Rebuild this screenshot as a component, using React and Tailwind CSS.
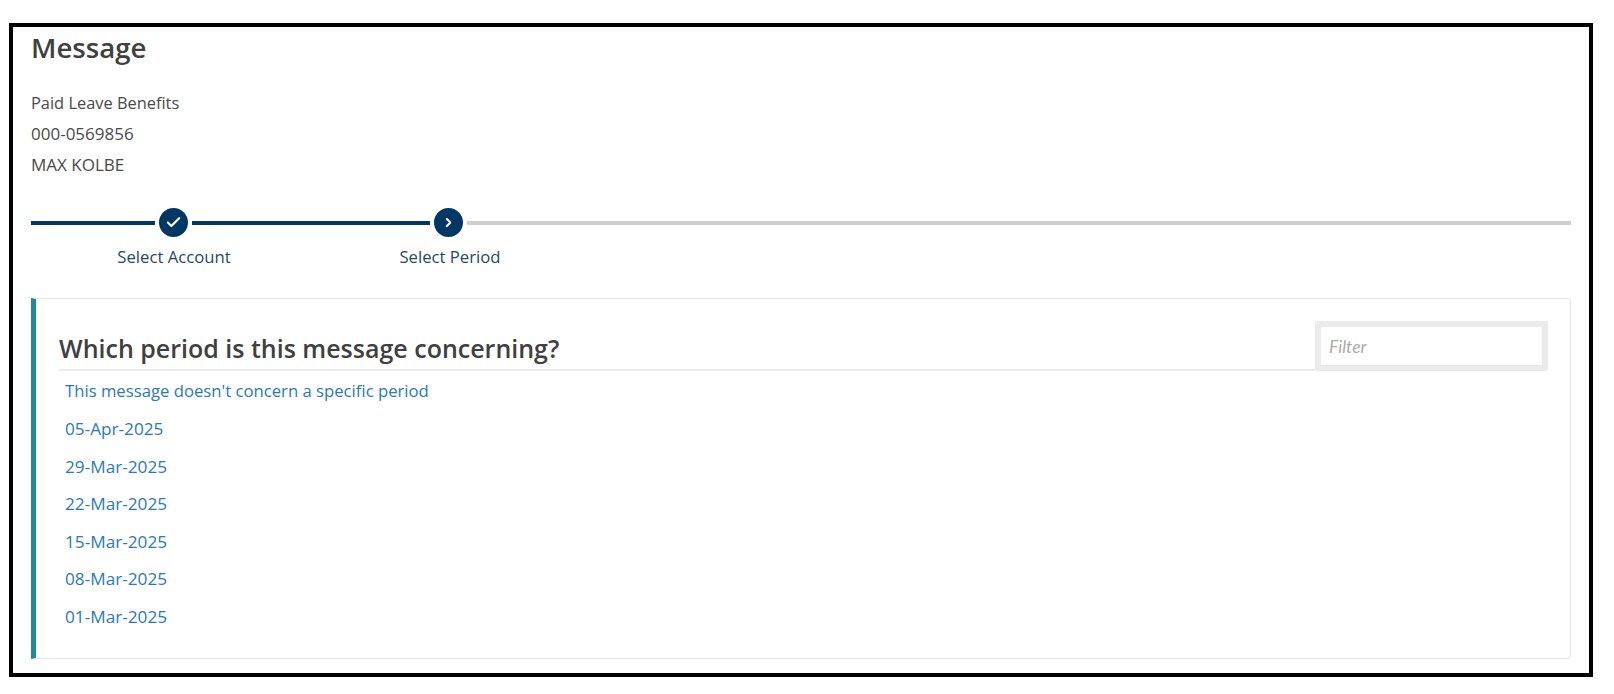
import { Check, ChevronRight } from "lucide-react";

const periods = [
  "05-Apr-2025",
  "29-Mar-2025",
  "22-Mar-2025",
  "15-Mar-2025",
  "08-Mar-2025",
  "01-Mar-2025",
];

function StepDot({ children }) {
  return (
    <div className="w-[29px] h-[29px] rounded-full bg-[#003764] text-white flex items-center justify-center shrink-0">
      {children}
    </div>
  );
}

function Stepper() {
  return (
    <div className="mt-[28px]">
      <div className="flex items-center h-[29px] gap-[4px]">
        <div className="h-[4px] w-[124px] bg-[#003764]"></div>
        <StepDot>
          <Check size={17} strokeWidth={3} />
        </StepDot>
        <div className="h-[4px] w-[238px] bg-[#003764]"></div>
        <StepDot>
          <ChevronRight size={15} strokeWidth={3} />
        </StepDot>
        <div className="h-[4px] flex-1 bg-[#cfcfcf]"></div>
      </div>
      <div className="flex mt-[8px] text-[16.7px] leading-[24px] text-[#27476a]">
        <div className="w-[286px] text-center">Select Account</div>
        <div className="w-[266px] text-center">Select Period</div>
      </div>
    </div>
  );
}

export default function App() {
  return (
    <div className="bg-white h-[694px] pt-[23px] pl-[9px] font-['Open_Sans',sans-serif]">
      <div className="w-[1584px] h-[654px] border-4 border-[#000] pl-[18px] pr-[18px]">
        <h1 className="text-[27.6px] leading-[36px] font-semibold text-[#404040] mt-[2px]">
          Message
        </h1>
        <div className="mt-[22px] text-[16.4px] leading-[31px] text-[#4a4a4a]">
          <div>Paid Leave Benefits</div>
          <div className="text-[17px]">000-0569856</div>
          <div className="text-[17px]">MAX KOLBE</div>
        </div>

        <Stepper />

        <div className="mt-[29px] h-[361px] border border-[#e6e6e6] border-l-[5px] border-l-[#1f8a9c] rounded-r-[4px] pl-[23px] pr-[22px]">
          <div className="flex items-end justify-between pt-[22px]">
            <h2 className="flex-1 h-[48px] border-b-2 border-[#ebebeb] text-[25px] leading-[44px] font-semibold text-[#404040] pt-[3px]">
              Which period is this message concerning?
            </h2>
            <input
              placeholder="Filter"
              className="w-[233px] h-[50px] border-[6px] border-[#ebebeb] rounded-[2px] px-[8px] bg-white text-[17.5px] italic font-['Lato',sans-serif] placeholder:text-[#aaaaaa] outline-none"
            />
          </div>
          <div className="pl-[6px] pt-[8px] leading-[24px] text-[#2a7ab8]">
            <div className="text-[16.7px]">
              This message doesn't concern a specific period
            </div>
            <div className="flex flex-col gap-[13.6px] mt-[14px] text-[17.2px]">
              {periods.map((p) => (
                <a key={p} href="#">
                  {p}
                </a>
              ))}
            </div>
          </div>
        </div>
      </div>
    </div>
  );
}
